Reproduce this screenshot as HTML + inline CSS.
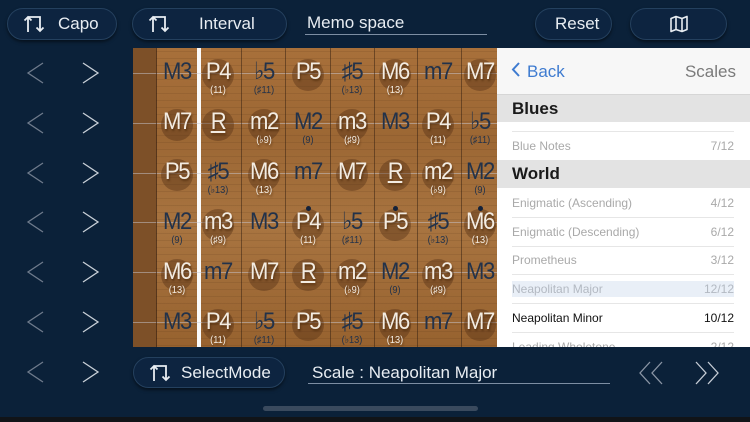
<!DOCTYPE html>
<html><head><meta charset="utf-8"><style>
*{margin:0;padding:0;box-sizing:border-box}
body{width:750px;height:422px;background:#0b2139;position:relative;overflow:hidden;font-family:"Liberation Sans",sans-serif}
.pill{position:absolute;border-radius:17px;background:#0d2440;border:1px solid #24405e;box-shadow:0 2px 3px rgba(0,0,0,.5);color:#e8edf2;font-size:17px}
.pill span{position:absolute;top:50%;transform:translateY(-50%)}
.ic{position:absolute;top:50%;transform:translateY(-50%)}
.fb{position:absolute;left:133px;top:48px;width:364px;height:299px;background:repeating-linear-gradient(180deg,rgba(0,0,0,0) 0 3px,rgba(70,40,15,.12) 3px 4px,rgba(0,0,0,0) 4px 7px),linear-gradient(180deg,#a8703a,#9c6734 30%,#a87440 60%,#97622f);overflow:hidden}
.n{position:absolute;width:44px;text-align:center;font-size:24px;font-weight:normal;letter-spacing:-1.5px;line-height:26px;transform:scaleX(.92)}
.n small{display:block;font-size:10px;line-height:11px;letter-spacing:0}
.w{color:#f3ece2;text-shadow:1px 2px 2px rgba(60,30,0,.5)}
.d{color:#22324a}
.str{position:absolute;left:0;width:364px;height:1px;background:rgba(200,200,210,.5)}
.fr{position:absolute;top:0;width:1px;height:299px;background:rgba(50,30,15,.5)}
.cir{position:absolute;width:32px;height:32px;border-radius:50%;background:rgba(80,45,20,.4)}
.pn{position:absolute;left:497px;top:48px;width:253px;height:299px;background:#fff;overflow:hidden;font-size:12px}
.row{position:absolute;left:15px;width:222px;height:29px;border-bottom:1px solid #e6e6e6;line-height:28px;color:#a9a9a9}
.row b{position:absolute;right:0;top:0;font-weight:400}
.sec{position:absolute;left:0;width:253px;background:#e3e3e3;font-size:17px;font-weight:bold;color:#1a1a1a;padding-left:15px}
</style></head><body>

<div class="pill" style="left:7px;top:8px;width:110px;height:32px"><svg class="ic" style="left:15px" width="22" height="20" viewBox="0 0 22 20" fill="none" stroke="#e8edf2" stroke-width="1.8"><path d="M5 18V3M1.5 6.5L5 3l3.5 3.5M5 3h12v14M13.5 13.5L17 17l3.5-3.5"/></svg><span style="left:50px">Capo</span></div>
<div class="pill" style="left:132px;top:8px;width:155px;height:32px"><svg class="ic" style="left:15px" width="22" height="20" viewBox="0 0 22 20" fill="none" stroke="#e8edf2" stroke-width="1.8"><path d="M5 18V3M1.5 6.5L5 3l3.5 3.5M5 3h12v14M13.5 13.5L17 17l3.5-3.5"/></svg><span style="left:66px">Interval</span></div>
<div style="position:absolute;left:307px;top:13px;color:#e8edf2;font-size:17px">Memo space</div>
<div style="position:absolute;left:305px;top:34px;width:182px;height:1px;background:#7d8ea3"></div>
<div class="pill" style="left:535px;top:8px;width:77px;height:32px"><span style="left:19px">Reset</span></div>
<div class="pill" style="left:630px;top:8px;width:97px;height:32px"><svg class="ic" style="left:39px" width="18" height="17" viewBox="0 0 18 17" fill="none" stroke="#e8edf2" stroke-width="1.6" stroke-linejoin="round"><path d="M1 3l5-2 6 2 5-2v13l-5 2-6-2-5 2zM6 1v13M12 3v13"/></svg></div>

<div id="arrows"></div>

<div class="fb">
<div style="position:absolute;left:0;top:0;width:23px;height:299px;background:#7d5028"></div>
<div style="position:absolute;left:64px;top:0;width:4px;height:299px;background:#fafafa"></div>
<div id="g"></div>
</div>

<div class="pn">
<div style="position:absolute;left:0;top:0;width:253px;height:47px;background:#f7f7f7;border-bottom:1px solid #d6d6d6"></div>
<div style="position:absolute;left:14px;top:14px;color:#3e7bd0;font-size:17px"><svg width="10" height="15" viewBox="0 0 10 15" style="margin-right:6px" fill="none" stroke="#3e7bd0" stroke-width="2"><path d="M8 1L2 7.5 8 14"/></svg>Back</div>
<div style="position:absolute;right:14px;top:14px;color:#7a7a7a;font-size:17px">Scales</div>
<div class="sec" style="top:47px;height:27px;line-height:27px">Blues</div>
<div class="row" style="top:55px;height:29px"></div>
<div class="row" style="top:84px;line-height:28px">Blue Notes<b>7/12</b></div>
<div class="sec" style="top:112px;height:28px;line-height:28px">World</div>
<div class="row" style="top:141px">Enigmatic (Ascending)<b>4/12</b></div>
<div class="row" style="top:170px">Enigmatic (Descending)<b>6/12</b></div>
<div class="row" style="top:198px">Prometheus<b>3/12</b></div>
<div class="row" style="top:227px;color:#b3b9c2"><div style="position:absolute;left:0;top:6px;width:222px;height:16px;background:#e9eff7"></div><span style="position:relative">Neapolitan Major</span><b>12/12</b></div>
<div class="row" style="top:256px;color:#111">Neapolitan Minor<b>10/12</b></div>
<div class="row" style="top:285px">Leading Wholetone<b>2/12</b></div>
</div>

<div class="pill" style="left:133px;top:357px;width:152px;height:31px"><svg class="ic" style="left:15px" width="22" height="20" viewBox="0 0 22 20" fill="none" stroke="#e8edf2" stroke-width="1.8"><path d="M5 18V3M1.5 6.5L5 3l3.5 3.5M5 3h12v14M13.5 13.5L17 17l3.5-3.5"/></svg><span style="left:47px">SelectMode</span></div>
<div style="position:absolute;left:312px;top:363px;color:#e8edf2;font-size:17px">Scale : Neapolitan Major</div>
<div style="position:absolute;left:308px;top:383px;width:302px;height:1px;background:#7d8ea3"></div>
<svg style="position:absolute;left:638px;top:360px" width="90" height="26" viewBox="0 0 90 26" fill="none" stroke-width="1.3"><path d="M12 2L2 13l10 11M24 2L14 13l10 11" stroke="#8a95a5"/><path d="M58 2l10 11-10 11M70 2l10 11-10 11" stroke="#c5ccd5"/></svg>
<div style="position:absolute;left:263px;top:406px;width:215px;height:5px;border-radius:3px;background:#3a4a5e"></div>
<div style="position:absolute;left:0;top:417px;width:750px;height:5px;background:#111418"></div>

<script>
var a='';[73,123,173,222,272,322,372].forEach(function(y){
a+='<svg style="position:absolute;left:26px;top:'+(y-11)+'px" width="74" height="22" viewBox="0 0 74 22" fill="none" stroke-width="1.3"><path d="M17 1L2 11l15 10" stroke="#6f7b8c"/><path d="M57 1l15 10-15 10" stroke="#c9d0d8"/></svg>';});
document.getElementById('arrows').innerHTML=a;
var rows=[
[['M3'],['P4','11'],['b5','#11'],['P5'],['#5','b13'],['M6','13'],['m7'],['M7']],
[['M7'],['R'],['m2','b9'],['M2','9'],['m3','#9'],['M3'],['P4','11'],['b5','#11']],
[['P5'],['#5','b13'],['M6','13'],['m7'],['M7'],['R'],['m2','b9'],['M2','9']],
[['M2','9'],['m3','#9'],['M3'],['P4','11'],['b5','#11'],['P5'],['#5','b13'],['M6','13']],
[['M6','13'],['m7'],['M7'],['R'],['m2','b9'],['M2','9'],['m3','#9'],['M3']],
[['M3'],['P4','11'],['b5','#11'],['P5'],['#5','b13'],['M6','13'],['m7'],['M7']]];
var ins={R:1,m2:1,m3:1,P4:1,P5:1,M6:1,M7:1};
var xs=[44,85,131,175,219,262,305,347];
var h='';
[25,75,125,174,224,274].forEach(function(y){h+='<div class="str" style="top:'+y+'px"></div>'});
[108,152,197,241,284,328].forEach(function(x){h+='<div class="fr" style="left:'+x+'px"></div>'});
h+='<div style="position:absolute;left:23px;top:0;width:1px;height:299px;background:rgba(40,20,10,.6)"></div>';
rows.forEach(function(r,i){var cy=25+i*50;
r.forEach(function(c,j){var cx=xs[j];var w=ins[c[0]];
if(w)h+='<div class="cir" style="left:'+(cx-16)+'px;top:'+(cy-14)+'px"></div>';
var t=c[0].replace('b','\u266D').replace('#','\u266F');
if(t=='R')t='<u>R</u>';
h+='<div class="n '+(w?'w':'d')+'" style="left:'+(cx-22)+'px;top:'+(cy-14)+'px">'+t+(c[1]?'<small>('+c[1].replace('b','\u266D').replace('#','\u266F')+')</small>':'')+'</div>';});});
[[175,158],[262,158],[347,158]].forEach(function(p){h+='<div style="position:absolute;left:'+(p[0]-2)+'px;top:'+p[1]+'px;width:5px;height:5px;border-radius:50%;background:#14223a"></div>'});
document.getElementById('g').innerHTML=h;
</script>
</body></html>
